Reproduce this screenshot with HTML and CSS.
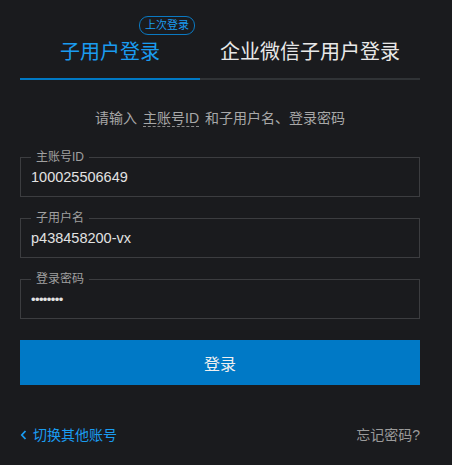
FILE: index.html
```html
<!DOCTYPE html>
<html lang="zh-CN">
<head>
<meta charset="utf-8">
<title>子用户登录</title>
<link rel="stylesheet" href="styles.css">
</head>
<body>
<div class="login">
  <div class="tabs">
    <div class="tab tab-active">子用户登录<span class="badge">上次登录</span></div>
    <div class="tab tab-wide">企业微信子用户登录</div>
  </div>
  <p class="hint">请输入 <span class="dashed">主账号ID</span> 和子用户名、登录密码</p>
  <form class="form">
    <div class="field">
      <label class="field-label">主账号ID</label>
      <input class="field-input" type="text" value="100025506649">
    </div>
    <div class="field">
      <label class="field-label">子用户名</label>
      <input class="field-input" type="text" value="p438458200-vx">
    </div>
    <div class="field">
      <label class="field-label">登录密码</label>
      <input class="field-input field-pass" type="password" value="12345678">
    </div>
    <button class="submit" type="button">登录</button>
  </form>
  <div class="footer">
    <a class="back"><svg class="chev" width="7" height="10" viewBox="0 0 7 10"><path d="M5.5 1 L1.8 5 L5.5 9" fill="none" stroke="currentColor" stroke-width="1.8"/></svg>切换其他账号</a>
    <a class="forgot">忘记密码?</a>
  </div>
</div>
</body>
</html>
```
FILE: styles.css
```css
html, body {
  margin: 0;
  padding: 0;
  background: #1a1b1e;
}
body {
  font-family: "Liberation Sans", "Noto Sans CJK SC", sans-serif;
  color: #e6e6e6;
}
.login {
  width: 400px;
  margin-left: 20px;
}
.tabs {
  display: flex;
  border-bottom: 2px solid #303336;
}
.tab {
  position: relative;
  width: 180px;
  padding: 38px 0 12px;
  font-size: 20px;
  line-height: 28px;
  text-align: center;
  color: #e8e8e8;
}
.tab-wide {
  width: 220px;
}
.tab-active {
  color: #1a9cf0;
  border-bottom: 2px solid #0079c4;
  margin-bottom: -2px;
}
.badge {
  position: absolute;
  left: 119px;
  top: 16px;
  height: 17px;
  padding: 0 5px;
  border: 1px solid #0a79c2;
  border-radius: 9px;
  font-size: 11px;
  line-height: 17px;
  color: #1a9cf0;
}
.hint {
  margin: 28px 0 0;
  font-size: 14px;
  line-height: 20px;
  text-align: center;
  color: #a8a8a8;
}
.dashed {
  border-bottom: 1px dashed #8a8a8a;
  margin: 0 2px;
}
.form {
  margin-top: 29px;
  display: flex;
  flex-direction: column;
  gap: 21px;
}
.field {
  position: relative;
  height: 40px;
  box-sizing: border-box;
  border: 1px solid #3c3d40;
}
.field-label {
  position: absolute;
  left: 10px;
  top: -9px;
  padding: 0 5px;
  background: #1a1b1e;
  font-size: 12px;
  line-height: 16px;
  color: #a0a0a0;
}
.field-input {
  display: block;
  width: 100%;
  height: 38px;
  box-sizing: border-box;
  padding: 0 10px;
  border: 0;
  outline: none;
  background: transparent;
  font-family: "Liberation Sans", "Noto Sans CJK SC", sans-serif;
  font-size: 14.5px;
  color: #e2e2e2;
}
.field-pass {
  letter-spacing: -0.6px;
  font-size: 13px;
}
.submit {
  height: 45px;
  border: 0;
  background: #0079c6;
  color: #f0f0f0;
  font-family: "Liberation Sans", "Noto Sans CJK SC", sans-serif;
  font-size: 16px;
}
.footer {
  margin-top: 40px;
  display: flex;
  justify-content: space-between;
  align-items: center;
  font-size: 14px;
  line-height: 20px;
}
.back {
  display: flex;
  align-items: center;
  gap: 6px;
  color: #1a9cf0;
}
.forgot {
  color: #9a9a9a;
}
```
